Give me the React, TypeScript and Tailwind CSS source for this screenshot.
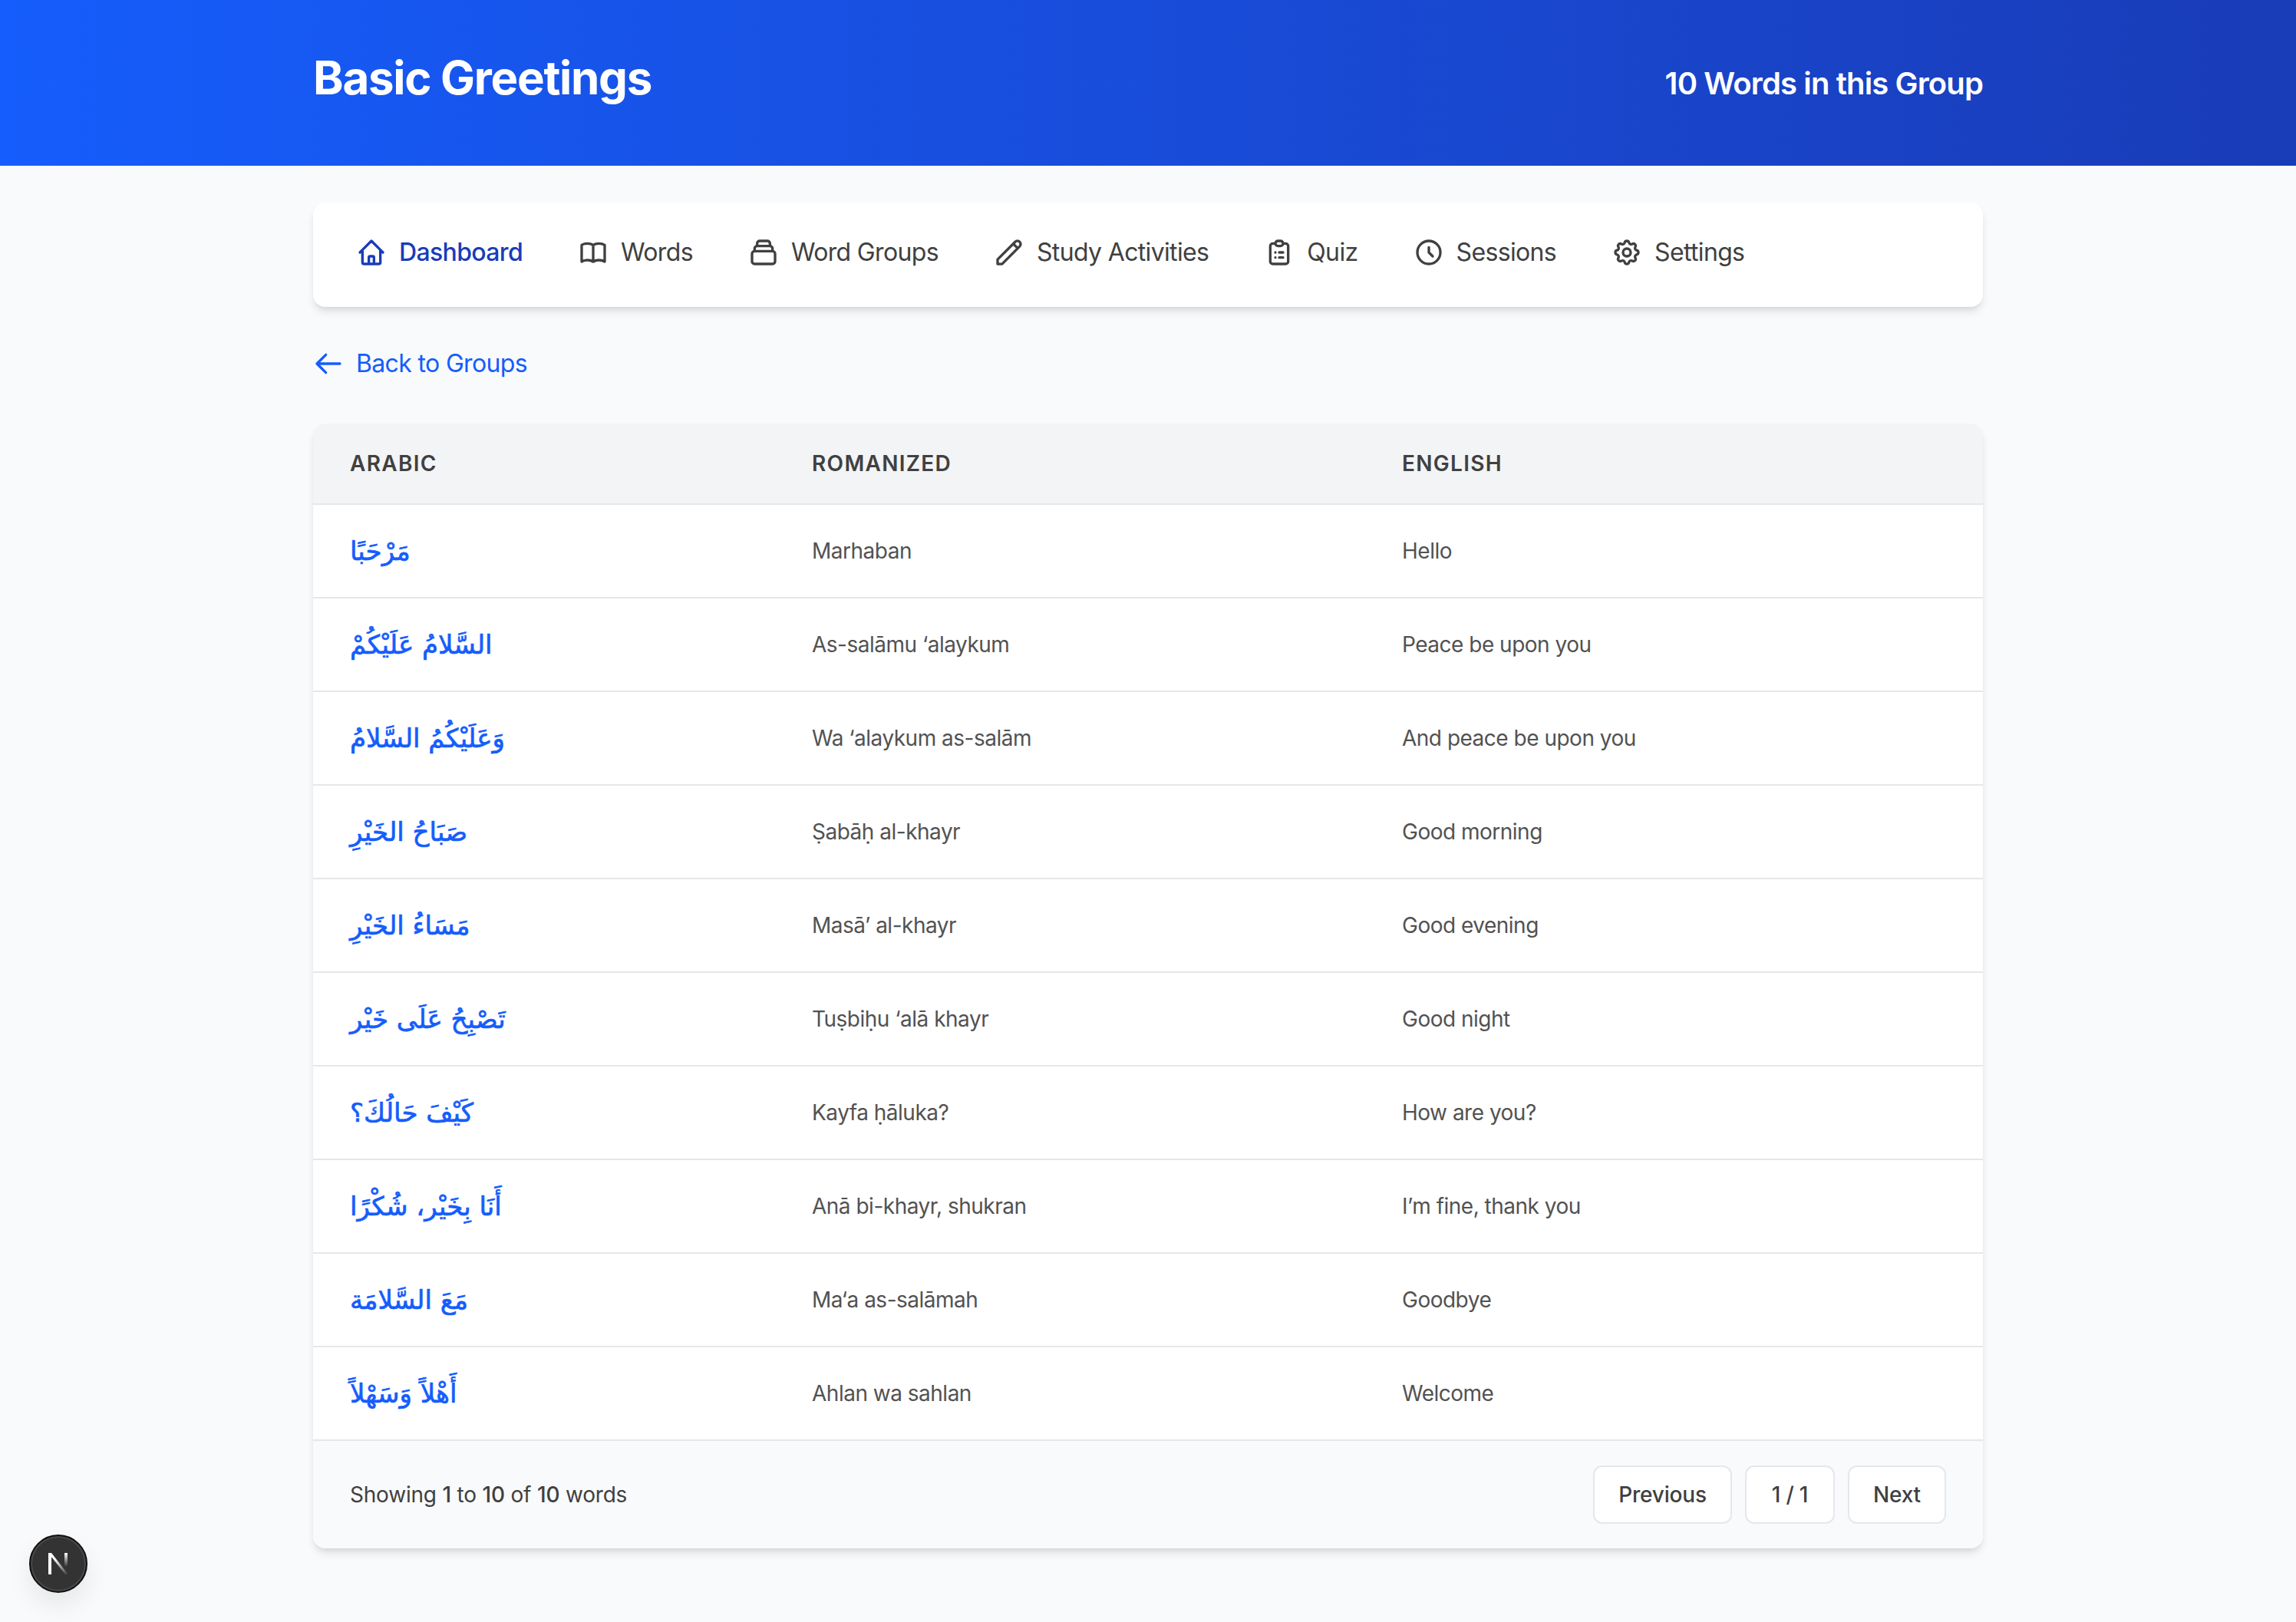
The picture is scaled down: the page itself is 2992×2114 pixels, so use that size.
import React from "react";
import {
  HiOutlineArrowLeft,
  HiOutlineBookOpen,
  HiOutlineClipboardList,
  HiOutlineClock,
  HiOutlineCog,
  HiOutlineCollection,
  HiOutlineHome,
  HiOutlinePencil,
} from "react-icons/hi";

const navItems = [
  { label: "Dashboard", icon: HiOutlineHome, active: true },
  { label: "Words", icon: HiOutlineBookOpen },
  { label: "Word Groups", icon: HiOutlineCollection },
  { label: "Study Activities", icon: HiOutlinePencil },
  { label: "Quiz", icon: HiOutlineClipboardList },
  { label: "Sessions", icon: HiOutlineClock },
  { label: "Settings", icon: HiOutlineCog },
];

const words = [
  ["مَرْحَبًا", "Marhaban", "Hello"],
  ["السَّلامُ عَلَيْكُمْ", "As-salāmu ‘alaykum", "Peace be upon you"],
  ["وَعَلَيْكُمُ السَّلامُ", "Wa ‘alaykum as-salām", "And peace be upon you"],
  ["صَبَاحُ الخَيْرِ", "Ṣabāḥ al-khayr", "Good morning"],
  ["مَسَاءُ الخَيْرِ", "Masā’ al-khayr", "Good evening"],
  ["تَصْبِحُ عَلَى خَيْر", "Tuṣbiḥu ‘alā khayr", "Good night"],
  ["كَيْفَ حَالُكَ؟", "Kayfa ḥāluka?", "How are you?"],
  ["أَنَا بِخَيْر، شُكْرًا", "Anā bi-khayr, shukran", "I’m fine, thank you"],
  ["مَعَ السَّلامَة", "Ma‘a as-salāmah", "Goodbye"],
  ["أَهْلاً وَسَهْلاً", "Ahlan wa sahlan", "Welcome"],
];

export default function App() {
  return (
    <div className="min-h-[2114px] bg-[#f9fafb] font-['Inter','Noto_Sans',sans-serif] text-[#404040]">
      {/* Header */}
      <header className="h-[216px] bg-gradient-to-r from-[#155dfc] to-[#193cb8]">
        <div className="mx-auto flex h-full w-[2304px] items-center justify-between px-16">
          <h1 className="mb-[14px] text-[60px] font-bold leading-none tracking-[-1.3px] text-white">Basic Greetings</h1>
          <div className="mt-[2px] text-[40px] font-semibold leading-none tracking-[-0.87px] text-white">10 Words in this Group</div>
        </div>
      </header>

      <main className="mx-auto w-[2304px] px-16 pt-12">
        {/* Nav */}
        <nav className="flex h-[136px] items-center gap-6 rounded-2xl bg-white px-8 pb-[6px] shadow-[0_8px_12px_-2px_rgba(0,0,0,0.1),0_4px_8px_-4px_rgba(0,0,0,0.1)]">
          {navItems.map((item) => (
            <a
              key={item.label}
              className={`flex items-center gap-4 px-6 text-[32px] tracking-[-0.65px] ${item.active ? "font-medium text-[#193cb8]" : "text-[#404040]"}`}
            >
              <item.icon className="h-10 w-10" />
              {item.label}
            </a>
          ))}
        </nav>

        <a className="mt-[50px] flex h-[48px] items-center gap-4 text-[32px] tracking-[-0.65px] text-[#155dfc]">
          <HiOutlineArrowLeft className="h-10 w-10" />
          Back to Groups
        </a>

        {/* Table */}
        <div className="mt-[54px] overflow-hidden rounded-2xl bg-white shadow-[0_8px_12px_-2px_rgba(0,0,0,0.1),0_4px_8px_-4px_rgba(0,0,0,0.1)]">
          <div className="flex h-[106px] items-center border-b-2 border-[#e5e7eb] bg-[#f3f4f6] text-[28px] font-semibold tracking-[1.3px]">
            <div className="w-[602px] pl-12">ARABIC</div>
            <div className="w-[769px] pl-12">ROMANIZED</div>
            <div className="flex-1 pl-12">ENGLISH</div>
          </div>
          {words.map(([arabic, romanized, english]) => (
            <div key={romanized} className="flex h-[122px] items-center border-b-2 border-[#e5e7eb] text-[28px] tracking-[-0.5px] text-[#525252]">
              <div
                dir="rtl"
                className="flex w-[602px] justify-end pl-12 font-['DejaVu_Sans',sans-serif] text-[34px] tracking-normal text-[#155dfc] [-webkit-text-stroke:0.7px_#155dfc]"
              >
                {arabic}
              </div>
              <div className="w-[769px] pl-12">{romanized}</div>
              <div className="flex-1 pl-12">{english}</div>
            </div>
          ))}
          <div className="flex h-[140px] items-center justify-between bg-[#f9fafb] px-12 text-[28px] tracking-[-0.2px]">
            <span>
              Showing <span className="font-medium">1</span> to <span className="font-medium">10</span> of{" "}
              <span className="font-medium">10</span> words
            </span>
            <div className="flex gap-[17px] font-medium">
              <button className="h-[76px] w-[181px] rounded-xl border-2 border-[#e5e7eb] bg-white">Previous</button>
              <button className="h-[76px] w-[117px] rounded-xl border-2 border-[#e5e7eb] bg-white">1 / 1</button>
              <button className="h-[76px] w-[128px] rounded-xl border-2 border-[#e5e7eb] bg-white">Next</button>
            </div>
          </div>
        </div>
      </main>

      {/* Next.js dev indicator */}
      <div className="fixed bottom-[38px] left-[38px] flex h-[76px] w-[76px] items-center justify-center rounded-full border-2 border-[#111] bg-[#333] shadow-[inset_0_0_0_2px_#4a4a4a,0_16px_32px_rgba(0,0,0,0.08)]">
        <svg width="26" height="28" viewBox="0 0 26 28" fill="none">
          <defs>
            <linearGradient id="nfade" x1="0" y1="0" x2="0" y2="1">
              <stop offset="0" stopColor="#fff" />
              <stop offset="1" stopColor="#fff" stopOpacity="0" />
            </linearGradient>
            <linearGradient id="nfade2" x1="0.3" y1="0.3" x2="1" y2="1">
              <stop offset="0" stopColor="#fff" />
              <stop offset="1" stopColor="#fff" stopOpacity="0" />
            </linearGradient>
          </defs>
          <rect x="0" y="0" width="4" height="28" fill="#fff" />
          <polygon points="0,0 4,0 26,28 22,28" fill="url(#nfade2)" />
          <rect x="21" y="0" width="4" height="18" fill="url(#nfade)" />
        </svg>
      </div>
    </div>
  );
}
